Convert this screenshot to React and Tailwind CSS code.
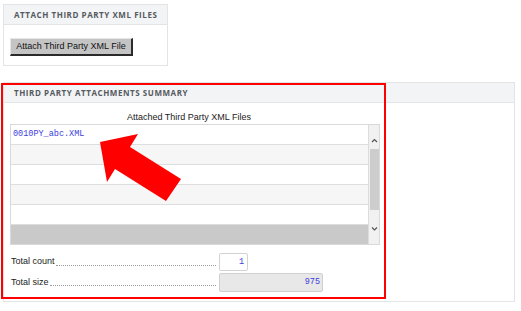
import React from "react";

const hdr = "font-['Open_Sans',sans-serif] font-bold uppercase text-[8px] tracking-[0.07em] text-[#555a60]";
const arial = "font-['Liberation_Sans',Arial,sans-serif]";
const mono = "font-['Liberation_Mono','Courier_New',monospace]";

export default function App() {
  const rows = ["0010PY_abc.XML", "", "", "", ""];
  return (
    <div className="relative w-[521px] h-[311px] bg-white overflow-hidden">
      {/* top box */}
      <div className="ml-[3px] mt-[4px] w-[165px] h-[62px] border border-[#e3e4e6] bg-white">
        <div className={`h-[20px] bg-[#f3f4f6] border-b border-[#e3e4e6] flex items-center pl-[10px] ${hdr}`}>
          Attach Third Party XML Files
        </div>
        <div className="pl-[6px] pt-[13px]">
          <button className={`${arial} text-[9px] text-[#111] w-[123px] h-[18px] bg-[#c4c4c4] border-t border-l border-[#e6e6e6] border-b-2 border-r-2 border-b-[#2a2a2a] border-r-[#2a2a2a] flex items-center justify-center`}>
            Attach Third Party XML File
          </button>
        </div>
      </div>

      {/* summary panel */}
      <div className="ml-[3px] mt-[16px] w-[512px] h-[220px] border border-[#e3e4e6] bg-white flex flex-col">
        <div className={`h-[20px] shrink-0 bg-[#f3f4f6] border-b border-[#e3e4e6] flex items-center pl-[10px] ${hdr}`}>
          Third Party Attachments Summary
        </div>
        <div className="pl-[6px] pt-[8px] w-[376px]">
          <div className={`${arial} text-[9px] text-[#222] w-[358px] text-center leading-[12px]`}>
            Attached Third Party XML Files
          </div>
          <div className="mt-[1px] w-[370px] h-[121px] border border-[#d9d9d9] flex">
            <div className="flex-1 flex flex-col">
              {rows.map((r, i) => (
                <div
                  key={i}
                  className={`h-[20px] border-b border-[#dedede] flex items-center pl-[2px] ${i % 2 === 1 ? "bg-[#f6f6f6]" : "bg-white"} ${mono} text-[8.5px] text-[#3d3de0]`}
                >
                  {r}
                </div>
              ))}
              <div className="flex-1 bg-[#c9c9c9]" />
            </div>
            <div className="w-[11px] bg-[#f1f1f1] border-l border-[#dcdcdc] flex flex-col items-center">
              <svg width="7" height="14" viewBox="0 0 7 14" className="mt-[9px]">
                <path d="M1 8 L3.5 5.5 L6 8" fill="none" stroke="#555" strokeWidth="1.2" />
              </svg>
              <div className="w-[9px] h-[61px] bg-[#cdcdcd] mt-[1px]" />
              <svg width="7" height="14" viewBox="0 0 7 14" className="mt-[12px]">
                <path d="M1 5.5 L3.5 8 L6 5.5" fill="none" stroke="#555" strokeWidth="1.2" />
              </svg>
            </div>
          </div>

          <div className="mt-[8px] w-[313px] flex flex-col gap-[2px] pl-[1px]">
            <div className="flex items-center h-[18px]">
              <span className={`${arial} text-[9px] text-[#222]`}>Total count</span>
              <span className="flex-1 mx-[1px] mt-[6px] border-b border-dotted border-[#9a9a9a] w-0" />
              <div className={`w-[29px] h-[18px] border border-[#d2d2d2] rounded-[2px] bg-white flex items-center justify-end pr-[3px] ${mono} text-[8.5px] text-[#3d3de0] ml-[2px]`}>
                1
              </div>
              <div className="w-[75px]" />
            </div>
            <div className="flex items-center h-[19px]">
              <span className={`${arial} text-[9px] text-[#222]`}>Total size</span>
              <span className="flex-1 mx-[1px] mt-[6px] border-b border-dotted border-[#9a9a9a] w-0" />
              <div className={`w-[104px] h-[19px] border border-[#d0d0d0] rounded-[2px] bg-[#e8e8e8] flex items-center justify-end pr-[2px] ${mono} text-[8.5px] text-[#3d3de0] ml-[2px]`}>
                975
              </div>
            </div>
          </div>
        </div>
      </div>

      {/* red annotation overlay */}
      <div className="absolute left-[1px] top-[83px] w-[385px] h-[216px] border-2 border-[#ff0000] pointer-events-none" />
      <svg className="absolute left-0 top-0 pointer-events-none" width="521" height="311">
        <polygon
          points="100,142 138,134 130,147 181,179 166,201 115,169 107,182"
          fill="#ff0000"
        />
      </svg>
    </div>
  );
}
